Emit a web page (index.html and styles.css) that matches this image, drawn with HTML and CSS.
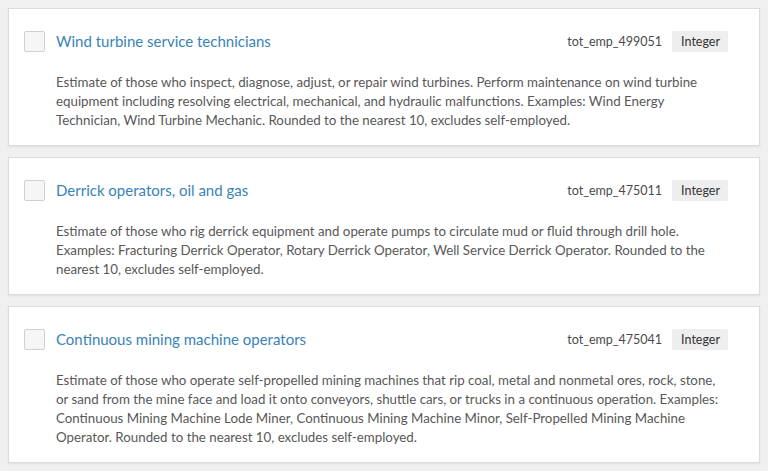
FILE: index.html
```html
<!DOCTYPE html>
<html lang="en">
<head>
    <meta charset="UTF-8">
    <meta name="viewport" content="width=device-width, initial-scale=1.0">
    <title>Fields</title>
    <link rel="stylesheet" href="styles.css">
</head>
<body>
<div class="field-list">
    <div class="field-card">
        <div class="field-head">
            <span class="check"></span>
            <a class="field-title">Wind turbine service technicians</a>
            <span class="field-name">tot_emp_499051</span>
            <span class="field-type">Integer</span>
        </div>
        <p class="field-desc">Estimate of those who inspect, diagnose, adjust, or repair wind turbines. Perform maintenance on wind turbine equipment including resolving electrical, mechanical, and hydraulic malfunctions. Examples: Wind Energy Technician, Wind Turbine Mechanic. Rounded to the nearest 10, excludes self-employed.</p>
    </div>
    <div class="field-card">
        <div class="field-head">
            <span class="check"></span>
            <a class="field-title">Derrick operators, oil and gas</a>
            <span class="field-name">tot_emp_475011</span>
            <span class="field-type">Integer</span>
        </div>
        <p class="field-desc">Estimate of those who rig derrick equipment and operate pumps to circulate mud or fluid through drill hole. Examples: Fracturing Derrick Operator, Rotary Derrick Operator, Well Service Derrick Operator. Rounded to the nearest 10, excludes self-employed.</p>
    </div>
    <div class="field-card">
        <div class="field-head">
            <span class="check"></span>
            <a class="field-title">Continuous mining machine operators</a>
            <span class="field-name">tot_emp_475041</span>
            <span class="field-type">Integer</span>
        </div>
        <p class="field-desc">Estimate of those who operate self-propelled mining machines that rip coal, metal and nonmetal ores, rock, stone, or sand from the mine face and load it onto conveyors, shuttle cars, or trucks in a continuous operation. Examples: Continuous Mining Machine Lode Miner, Continuous Mining Machine Minor, Self-Propelled Mining Machine Operator. Rounded to the nearest 10, excludes self-employed.</p>
    </div>
</div>
</body>
</html>
```

FILE: styles.css
```css
body {
    font-family: Lato, "Open Sans", sans-serif;
    margin: 0;
    padding: 8px;
    background-color: #f0f0f0;
}
.field-list {
    display: flex;
    flex-direction: column;
    gap: 11px;
}
.field-card {
    background: white;
    border: 1px solid #dcdcdc;
    box-shadow: 0 1px 2px rgba(0, 0, 0, 0.08);
    padding: 21px 31px 15px 15px;
}
.field-head {
    display: flex;
    align-items: center;
    height: 22px;
}
.check {
    width: 19px;
    height: 19px;
    border: 1px solid #d0d0d0;
    border-radius: 2px;
    background: #f6f6f6;
    margin-right: 11px;
    flex-shrink: 0;
}
.field-title {
    color: #3a83b8;
    font-size: 15px;
    flex: 1;
}
.field-name {
    color: #4a4a4a;
    font-size: 12.5px;
    margin-right: 10px;
}
.field-type {
    background: #eeeeee;
    color: #333;
    font-size: 12.5px;
    padding: 3px 8px 3px 9px;
    border-radius: 2px;
}
.field-desc {
    margin: 21px 0 0 32px;
    color: #585858;
    font-size: 13.3px;
    line-height: 19px;
}
```
